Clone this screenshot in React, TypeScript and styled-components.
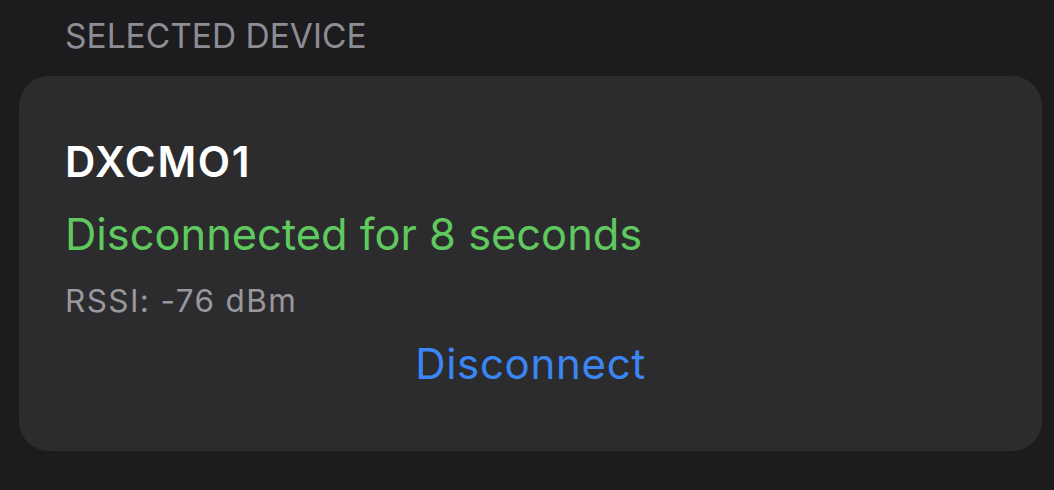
import React from "react"
import styled, { createGlobalStyle } from "styled-components"

const GlobalStyle = createGlobalStyle`
  html, body {
    margin: 0;
    padding: 0;
    background: #1c1c1e;
  }
  body {
    font-family: Inter, "Noto Sans", sans-serif;
    -webkit-font-smoothing: antialiased;
  }
`

const Page = styled.div`
  width: 1054px;
  height: 490px;
  box-sizing: border-box;
  padding: 16px 12px 0 19px;
  background: #1c1c1e;
  display: flex;
  flex-direction: column;
  gap: 20px;
  overflow: hidden;
`

const SectionHeader = styled.div`
  padding-left: 46px;
  font-size: 33.5px;
  line-height: 40px;
  color: #8d8d93;
  text-transform: uppercase;
`

const Card = styled.div`
  background: #2c2c2e;
  border-radius: 30px;
  padding: 62px 46px 63px;
  display: flex;
  flex-direction: column;
`

const DeviceName = styled.div`
  font-size: 42px;
  line-height: 48px;
  font-weight: 600;
  letter-spacing: 1.6px;
  color: #ffffff;
`

const Status = styled.div<{ $tone: "ok" | "bad" }>`
  margin-top: 22px;
  font-size: 43.4px;
  line-height: 52px;
  color: ${p => (p.$tone === "ok" ? "#5fc95f" : "#ff453a")};
`

const Rssi = styled.div`
  margin-top: 22px;
  font-size: 31.5px;
  line-height: 38px;
  letter-spacing: 1.4px;
  color: #98989e;
`

const ActionButton = styled.button`
  margin-top: 20px;
  align-self: center;
  border: none;
  background: none;
  padding: 0;
  font-family: inherit;
  font-size: 42px;
  line-height: 48px;
  letter-spacing: 0.7px;
  color: #3a86f5;
  cursor: pointer;
`

export default function App() {
  const device = { name: "DXCMO1", seconds: 8, rssi: -76 }

  return (
    <>
      <GlobalStyle />
      <Page>
        <SectionHeader>Selected Device</SectionHeader>
        <Card>
          <DeviceName>{device.name}</DeviceName>
          <Status $tone="ok">Disconnected for {device.seconds} seconds</Status>
          <Rssi>RSSI: {device.rssi} dBm</Rssi>
          <ActionButton>Disconnect</ActionButton>
        </Card>
      </Page>
    </>
  )
}
